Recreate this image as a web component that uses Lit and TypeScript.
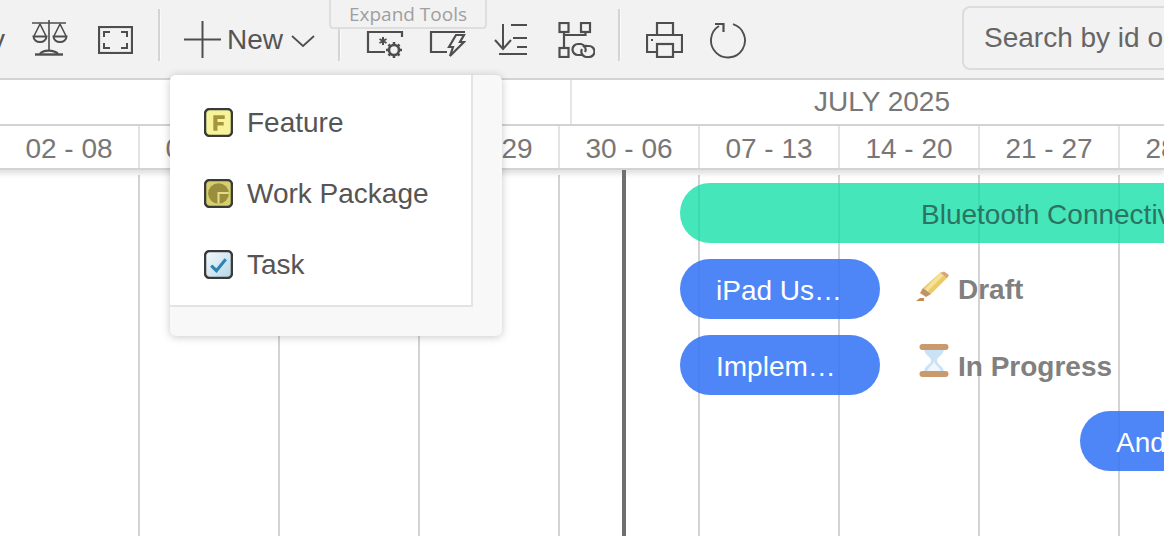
import { LitElement, html, css, svg } from "lit";
import { customElement } from "lit/decorators.js";

const ic = (w: number, h: number, body: unknown) =>
  html`<svg class="ic" width=${w} height=${h} viewBox="0 0 ${w} ${h}" fill="none" stroke="#4e4e4e" stroke-width="2">${body}</svg>`;

const scale = ic(36, 38, svg`
  <path d="M0 3h34M17 0v31M8 4 2 16M8 4l6 12M28 4l-6 12M28 4l6 12" stroke-width="1.600"/>
  <path d="M1.500 16.500h13a6.500 5.500 0 0 1-13 0ZM21.500 16.500h13a6.500 5.500 0 0 1-13 0Z" stroke-width="2"/>
  <path d="M3 34.500h28" stroke-width="2.400"/><path d="M8 34c3-4.500 14-4.500 18 0" stroke-width="2.400"/>`);
const frame = ic(35, 28, svg`
  <rect x="1" y="1" width="33" height="26" stroke-width="2.200"/>
  <path d="M6 11V6h6M29 11V6h-6M6 17v5h6M29 17v5h-6" stroke-width="2"/>`);
const plus = ic(37, 37, svg`<path d="M0 18.500h37M18.500 0v37" stroke-width="2"/>`);
const chev = ic(24, 14, svg`<path d="M1 2l11 10L23 2" stroke-width="1.700"/>`);
const cogs = ic(38, 28, svg`
  <path d="M36 7V2H2v20h17" stroke-width="2.200"/>
  <circle cx="28" cy="20" r="5" stroke-width="2.600"/>
  <path d="M28 12v3.500M28 24.500V28M20 20h3.500M32.500 20H36M22.500 14.500l2.500 2.500M31 23l2.500 2.500M33.500 14.500L31 17M25 23l-2.500 2.500" stroke-width="2.600"/>
  <path d="M17 7v8M13.500 9l7 4M20.500 9l-7 4" stroke-width="2"/>`);
const bolt = ic(37, 28, svg`
  <path d="M36 2H2v20h16" stroke-width="2.200"/>
  <path d="M27 5h8l-4 7h4L21 26l3-9h-4z" stroke-width="2.200"/>`);
const sortList = ic(34, 34, svg`
  <path d="M9 1v25M1 17l8 9 8-9" stroke-width="2"/>
  <path d="M5 31h28M17 2h16M19 15h14M23 24h10" stroke-width="2.200"/>`);
const tree = ic(37, 36, svg`
  <g stroke-width="2.200">
  <rect x="1.500" y="1" width="9" height="9"/><rect x="23" y="1" width="9" height="9"/><rect x="1.500" y="26" width="9" height="9"/>
  <path d="M6 10v16M27.500 10v3H6"/>
  <path d="M25 33h-5a5.500 5.500 0 0 1 0-11h3a5.500 5.500 0 0 1 4 8"/>
  <path d="M25 25a5 5 0 0 1 4-1h2a5.500 5.500 0 0 1 0 11h-3a5.500 5.500 0 0 1-4-8"/>
  </g>`);
const printer = ic(37, 37, svg`
  <path d="M11 14V2h16v12" stroke-width="2.200"/>
  <path d="M11 31H1V14h35v17H27" stroke-width="2.200"/>
  <rect x="11" y="23" width="16" height="13" stroke-width="2.200"/>
  <path d="M5 19h2" stroke-width="2"/>`);
const refresh = ic(38, 37, svg`
  <path d="M23 2.200A17 17 0 1 1 9 4" stroke-width="1.900"/>
  <path d="M5 2h8.500v8" stroke-width="2.200"/>`);

const itemIcon = (kind: "f" | "w" | "t") => {
  const edge = svg`<rect x="1" y="1" width="26" height="26" rx="4.500" fill="none" stroke="#3a3a3a" stroke-width="2.400"/>`;
  if (kind === "f")
    return html`<svg class="mi" width="29" height="29" viewBox="0 0 28 28"><rect x="1" y="1" width="26" height="26" rx="4" fill="#f6f39a"/>${edge}<path d="M9 7h11v3.500h-7v3h6V17h-6v5H9z" fill="#a5953f"/></svg>`;
  if (kind === "w")
    return html`<svg class="mi" width="29" height="29" viewBox="0 0 28 28"><rect x="1" y="1" width="26" height="26" rx="4" fill="#d6d06a"/>${edge}<circle cx="14" cy="14" r="10" fill="#9a8d3e"/><path d="M24 13.500H14v10.500" fill="none" stroke="#e3dc82" stroke-width="2"/></svg>`;
  return html`<svg class="mi" width="29" height="29" viewBox="0 0 28 28"><defs><linearGradient id="tg" x1="0" y1="0" x2="1" y2="1"><stop offset="0" stop-color="#f4fafd"/><stop offset="1" stop-color="#b4d6e6"/></linearGradient></defs><rect x="1" y="1" width="26" height="26" rx="4" fill="url(#tg)"/>${edge}<path d="M7 15l5 5 9-11" fill="none" stroke="#2d84b3" stroke-width="3"/></svg>`;
};

const pencil = html`<svg class="si" width="34" height="32" viewBox="0 0 34 32"><path d="M25 2l7 5-17 17-8-6z" fill="#eccb66"/><path d="M25 2l3.500 2.500-17 17-3-2z" fill="#f6e19a"/><path d="M28 1.500l5 3.500-2 3-6.500-5z" fill="#d6a67a"/><path d="M7 18l8 6-5 3-6-4z" fill="#c09268"/><path d="M0 31h8v-3H4z" fill="#c8894d"/></svg>`;
const glass = html`<svg class="si" width="30" height="33" viewBox="0 0 30 33"><path d="M5 4h20c0 8-7 8-7 12.500s7 5 7 12.500H5c0-8 7-8 7-12.500S5 12 5 4z" fill="#c9e2f6"/><path d="M15 17c-1 4-6 6-7 11h14c-1-5-6-7-7-11z" fill="#f0f7fc"/><rect x=".5" y="0" width="29" height="6" rx="3" fill="#c99a6b"/><rect x=".5" y="27" width="29" height="6" rx="3" fill="#c99a6b"/></svg>`;

const weeks = ["", "02 - 08", "09 - 15", "16 - 22", "23 - 29", "30 - 06", "07 - 13", "14 - 20", "21 - 27", "28 - 03"];

@customElement("app-root")
export class AppRoot extends LitElement {
  static styles = css`
    :host { display: block; width: 1164px; height: 536px; overflow: hidden; position: relative; background: #fff; font-family: "Liberation Sans", Arial, sans-serif; color: #555; }
    .toolbar { height: 78px; background: #f2f2f2; border-bottom: 2px solid #d3d3d3; display: flex; align-items: center; position: relative; overflow: hidden; }
    .ic { display: block; flex: none; }
    .tools { display: flex; align-items: center; height: 100%; }
    .sep { width: 2px; height: 52px; background: #d4d4d4; box-shadow: 1px 0 0 #fafafa; flex: none; margin-bottom: 8px; }
    .cut { width: 6px; overflow: hidden; font-size: 28px; flex: none; line-height: 32px; margin-top: 2px; }
    .cut span { display: block; margin-left: -9px; }
    .scale { margin-left: 26px; }
    .frame { margin: 2px 0 0 30px; }
    .new { font-size: 28px; display: flex; align-items: center; margin-left: 24px; line-height: 37px; }
    .new span { margin: 0 8px 0 6px; }
    .new .ic:last-child { margin-top: 3px; }
    .cogs { margin: 10px 0 0 26px; }
    .bolt { margin: 10px 0 0 25px; }
    .sort { margin: 2px 0 0 28px; }
    .tree { margin: 2px 0 0 30px; }
    .print { margin: 0 0 0 26px; }
    .refresh { margin: 2px 0 0 27px; }
    .tab { position: absolute; left: 329px; top: -2px; width: 158px; height: 31px; box-sizing: border-box; border: 2px solid #dedede; border-radius: 0 0 4px 4px; background: #f2f2f2; color: #9f9f9f; font-size: 19px; text-align: center; line-height: 29px; font-family: "Open Sans", sans-serif; }
    .search { position: absolute; left: 962px; top: 6px; width: 300px; height: 64px; box-sizing: border-box; border: 2px solid #dcdcdc; border-radius: 8px; font-size: 28px; color: #666; padding: 0 21px 0 20px; line-height: 59px; white-space: nowrap; background: #f2f2f2; }
    .months { height: 44px; display: flex; border-bottom: 2px solid #d3d3d3; }
    .m0 { width: 570px; flex: none; border-right: 2px solid #e6e6e6; }
    .m1 { flex: none; width: 620px; text-align: center; font-size: 28px; line-height: 43px; color: #777; }
    .weeks { display: flex; height: 42px; margin-left: -22px; border-bottom: 2px solid #d3d3d3; box-shadow: 0 4px 5px rgba(0,0,0,.12); position: relative; z-index: 1; }
    .w { width: 138px; flex: none; border-right: 2px solid #e3e3e3; text-align: center; font-size: 28px; line-height: 45px; color: #777; white-space: nowrap; overflow: hidden; }
    .w:first-child { width: 20px; }
    .canvas { position: relative; height: 366px; }
    .grid { position: absolute; top: 5px; bottom: 0; width: 2px; background: #d3d3d3; }
    .today { position: absolute; left: 622px; top: 0; bottom: 0; width: 4px; background: #6f6f6f; z-index: 2; }
    .bar { position: absolute; height: 60px; border-radius: 30px; color: #fff; font-size: 28px; line-height: 63px; white-space: nowrap; overflow: hidden; box-sizing: border-box; padding-left: 36px; background: rgba(52, 116, 246, .87); }
    .green { background: rgba(18, 223, 168, .78); color: #2c7361; left: 680px; top: 13px; width: 560px; padding-left: 241px; }
    .status { position: absolute; display: flex; align-items: flex-start; font-size: 28px; font-weight: 700; color: #808080; white-space: nowrap; line-height: 30px; }
    .si { display: block; flex: none; }
    .menu { position: absolute; left: 170px; top: 75px; width: 332px; height: 261px; background: #f8f8f8; border-radius: 6px; box-shadow: 0 1px 8px rgba(0,0,0,.22); z-index: 3; }
    .list { width: 303px; height: 232px; box-sizing: border-box; background: #fff; border-right: 2px solid #e3e3e3; border-bottom: 2px solid #e3e3e3; padding-top: 12px; border-radius: 6px 0 0 0; }
    .row { height: 71px; display: flex; align-items: center; padding-left: 34px; gap: 14px; font-size: 28px; color: #555; }
    .mi { display: block; flex: none; margin-top: -1px; }
  `;

  render() {
    return html`
      <div class="toolbar">
        <div class="tools">
          <div class="cut"><span>y</span></div>
          <div class="scale">${scale}</div>
          <div class="frame">${frame}</div>
          <div class="sep" style="margin-left:25px"></div>
          <div class="new">${plus}<span>New</span>${chev}</div>
          <div class="sep" style="margin-left:23px"></div>
          <div class="cogs">${cogs}</div>
          <div class="bolt">${bolt}</div>
          <div class="sort">${sortList}</div>
          <div class="tree">${tree}</div>
          <div class="sep" style="margin-left:23px"></div>
          <div class="print">${printer}</div>
          <div class="refresh">${refresh}</div>
        </div>
        <div class="tab">Expand Tools</div>
        <div class="search">Search by id o</div>
      </div>
      <div class="months"><div class="m0"></div><div class="m1">JULY 2025</div></div>
      <div class="weeks">${weeks.map((w) => html`<div class="w">${w}</div>`)}</div>
      <div class="canvas">
        ${[139, 279, 419, 559, 699, 839, 979, 1119].map((x) => html`<div class="grid" style="left:${x - 1}px"></div>`)}
        <div class="today"></div>
        <div class="bar green">Bluetooth Connectivity</div>
        <div class="bar" style="left:680px;top:89px;width:200px">iPad Us…</div>
        <div class="status" style="left:916px;top:100px">${pencil}<span style="margin:5px 0 0 8px">Draft</span></div>
        <div class="bar" style="left:680px;top:165px;width:200px">Implem…</div>
        <div class="status" style="left:919px;top:174px">${glass}<span style="margin:8px 0 0 9px">In Progress</span></div>
        <div class="bar" style="left:1080px;top:241px;width:200px">Android</div>
      </div>
      <div class="menu">
        <div class="list">
          <div class="row">${itemIcon("f")}Feature</div>
          <div class="row">${itemIcon("w")}Work Package</div>
          <div class="row">${itemIcon("t")}Task</div>
        </div>
      </div>
    `;
  }
}
